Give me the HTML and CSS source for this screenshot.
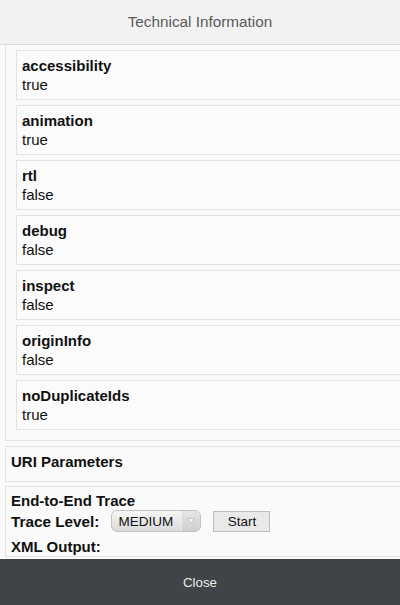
FILE: index.html
```html
<!DOCTYPE html>
<html>
<head>
<meta charset="utf-8">
<link rel="stylesheet" href="styles.css">
</head>
<body>
<div class="dialog">
  <header class="dlg-header">Technical Information</header>
  <main class="dlg-body">
    <section class="panel panel-cards">
      <div class="card"><div class="k">accessibility</div><div class="v">true</div></div>
      <div class="card"><div class="k">animation</div><div class="v">true</div></div>
      <div class="card"><div class="k">rtl</div><div class="v">false</div></div>
      <div class="card"><div class="k">debug</div><div class="v">false</div></div>
      <div class="card"><div class="k">inspect</div><div class="v">false</div></div>
      <div class="card"><div class="k">originInfo</div><div class="v">false</div></div>
      <div class="card"><div class="k">noDuplicateIds</div><div class="v">true</div></div>
    </section>
    <section class="panel panel-uri">
      <div class="k">URI Parameters</div>
    </section>
    <section class="panel panel-trace">
      <div class="k">End-to-End Trace</div>
      <div class="trace-row">
        <span class="k">Trace Level:</span>
        <span class="select"><span class="sel-text">MEDIUM</span><span class="sel-arrow"><svg width="8" height="6" viewBox="0 0 8 6"><path d="M0.5 0.5 L7.5 0.5 L4 5.5 Z" fill="#f4f4f4" stroke="#c4c4c4" stroke-width="1"/></svg></span></span>
        <span class="btn">Start</span>
      </div>
      <div class="k">XML Output:</div>
    </section>
  </main>
  <footer class="dlg-footer">Close</footer>
</div>
</body>
</html>
```
FILE: styles.css
```css
html, body {
  margin: 0;
  padding: 0;
}
body {
  width: 400px;
  height: 605px;
  overflow: hidden;
  font-family: "Liberation Sans", Arial, sans-serif;
  background: #fafafa;
  color: #000;
}
.dialog {
  display: flex;
  flex-direction: column;
  height: 605px;
}
.dlg-header {
  height: 44px;
  flex: none;
  border-bottom: 1px solid #dcdcdc;
  background: #f2f2f2;
  color: #5a5a5a;
  font-size: 15.3px;
  display: flex;
  align-items: center;
  justify-content: center;
}
.dlg-body {
  flex: 1;
  overflow: hidden;
  padding-left: 5px;
  background: #fafafa;
}
.panel {
  width: 420px;
  border: 1px solid #e2e2e2;
  background: #fafafa;
  box-sizing: border-box;
  font-size: 15px;
  line-height: 19px;
}
.panel-cards {
  border-top: none;
  padding: 5px 10px 10px 10px;
  display: flex;
  flex-direction: column;
  gap: 5px;
}
.card {
  border: 1px solid #e2e2e2;
  background: #fbfbfb;
  padding: 5px 5px 5px 5px;
  height: 50px;
  box-sizing: border-box;
}
.k {
  font-weight: bold;
  color: #111;
}
.v {
  color: #111;
}
.panel-uri {
  margin-top: 5px;
  height: 36px;
  padding: 5px 5px 0 5px;
}
.panel-trace {
  margin-top: 4px;
  padding: 4px 5px 0 5px;
}
.trace-row {
  display: flex;
  align-items: center;
  height: 22px;
  margin-bottom: 5px;
}
.trace-row .k {
  font-size: 15.3px;
}
.select {
  margin-left: 12px;
  width: 90px;
  height: 22px;
  box-sizing: border-box;
  border: 1px solid #c2c2c2;
  border-radius: 6px;
  background: linear-gradient(#f6f6f6, #dadada);
  display: flex;
  align-items: center;
  font-size: 13.5px;
  color: #111;
}
.sel-text {
  flex: 1;
  padding-left: 6px;
}
.sel-arrow {
  width: 18px;
  height: 100%;
  border-left: 1px solid #ececec;
  display: flex;
  align-items: center;
  justify-content: center;
  background: linear-gradient(#e6e6e6, #cfcfcf);
  border-radius: 0 5px 5px 0;
}
.btn {
  margin-left: 12px;
  width: 57px;
  height: 21px;
  box-sizing: border-box;
  border: 1px solid #bdbdbd;
  background: #e9e9e9;
  font-size: 13.5px;
  display: flex;
  align-items: center;
  justify-content: center;
  color: #111;
}
.dlg-footer {
  height: 46px;
  flex: none;
  background: #3e4447;
  color: #ececec;
  font-size: 13.33px;
  display: flex;
  align-items: center;
  justify-content: center;
}
```
